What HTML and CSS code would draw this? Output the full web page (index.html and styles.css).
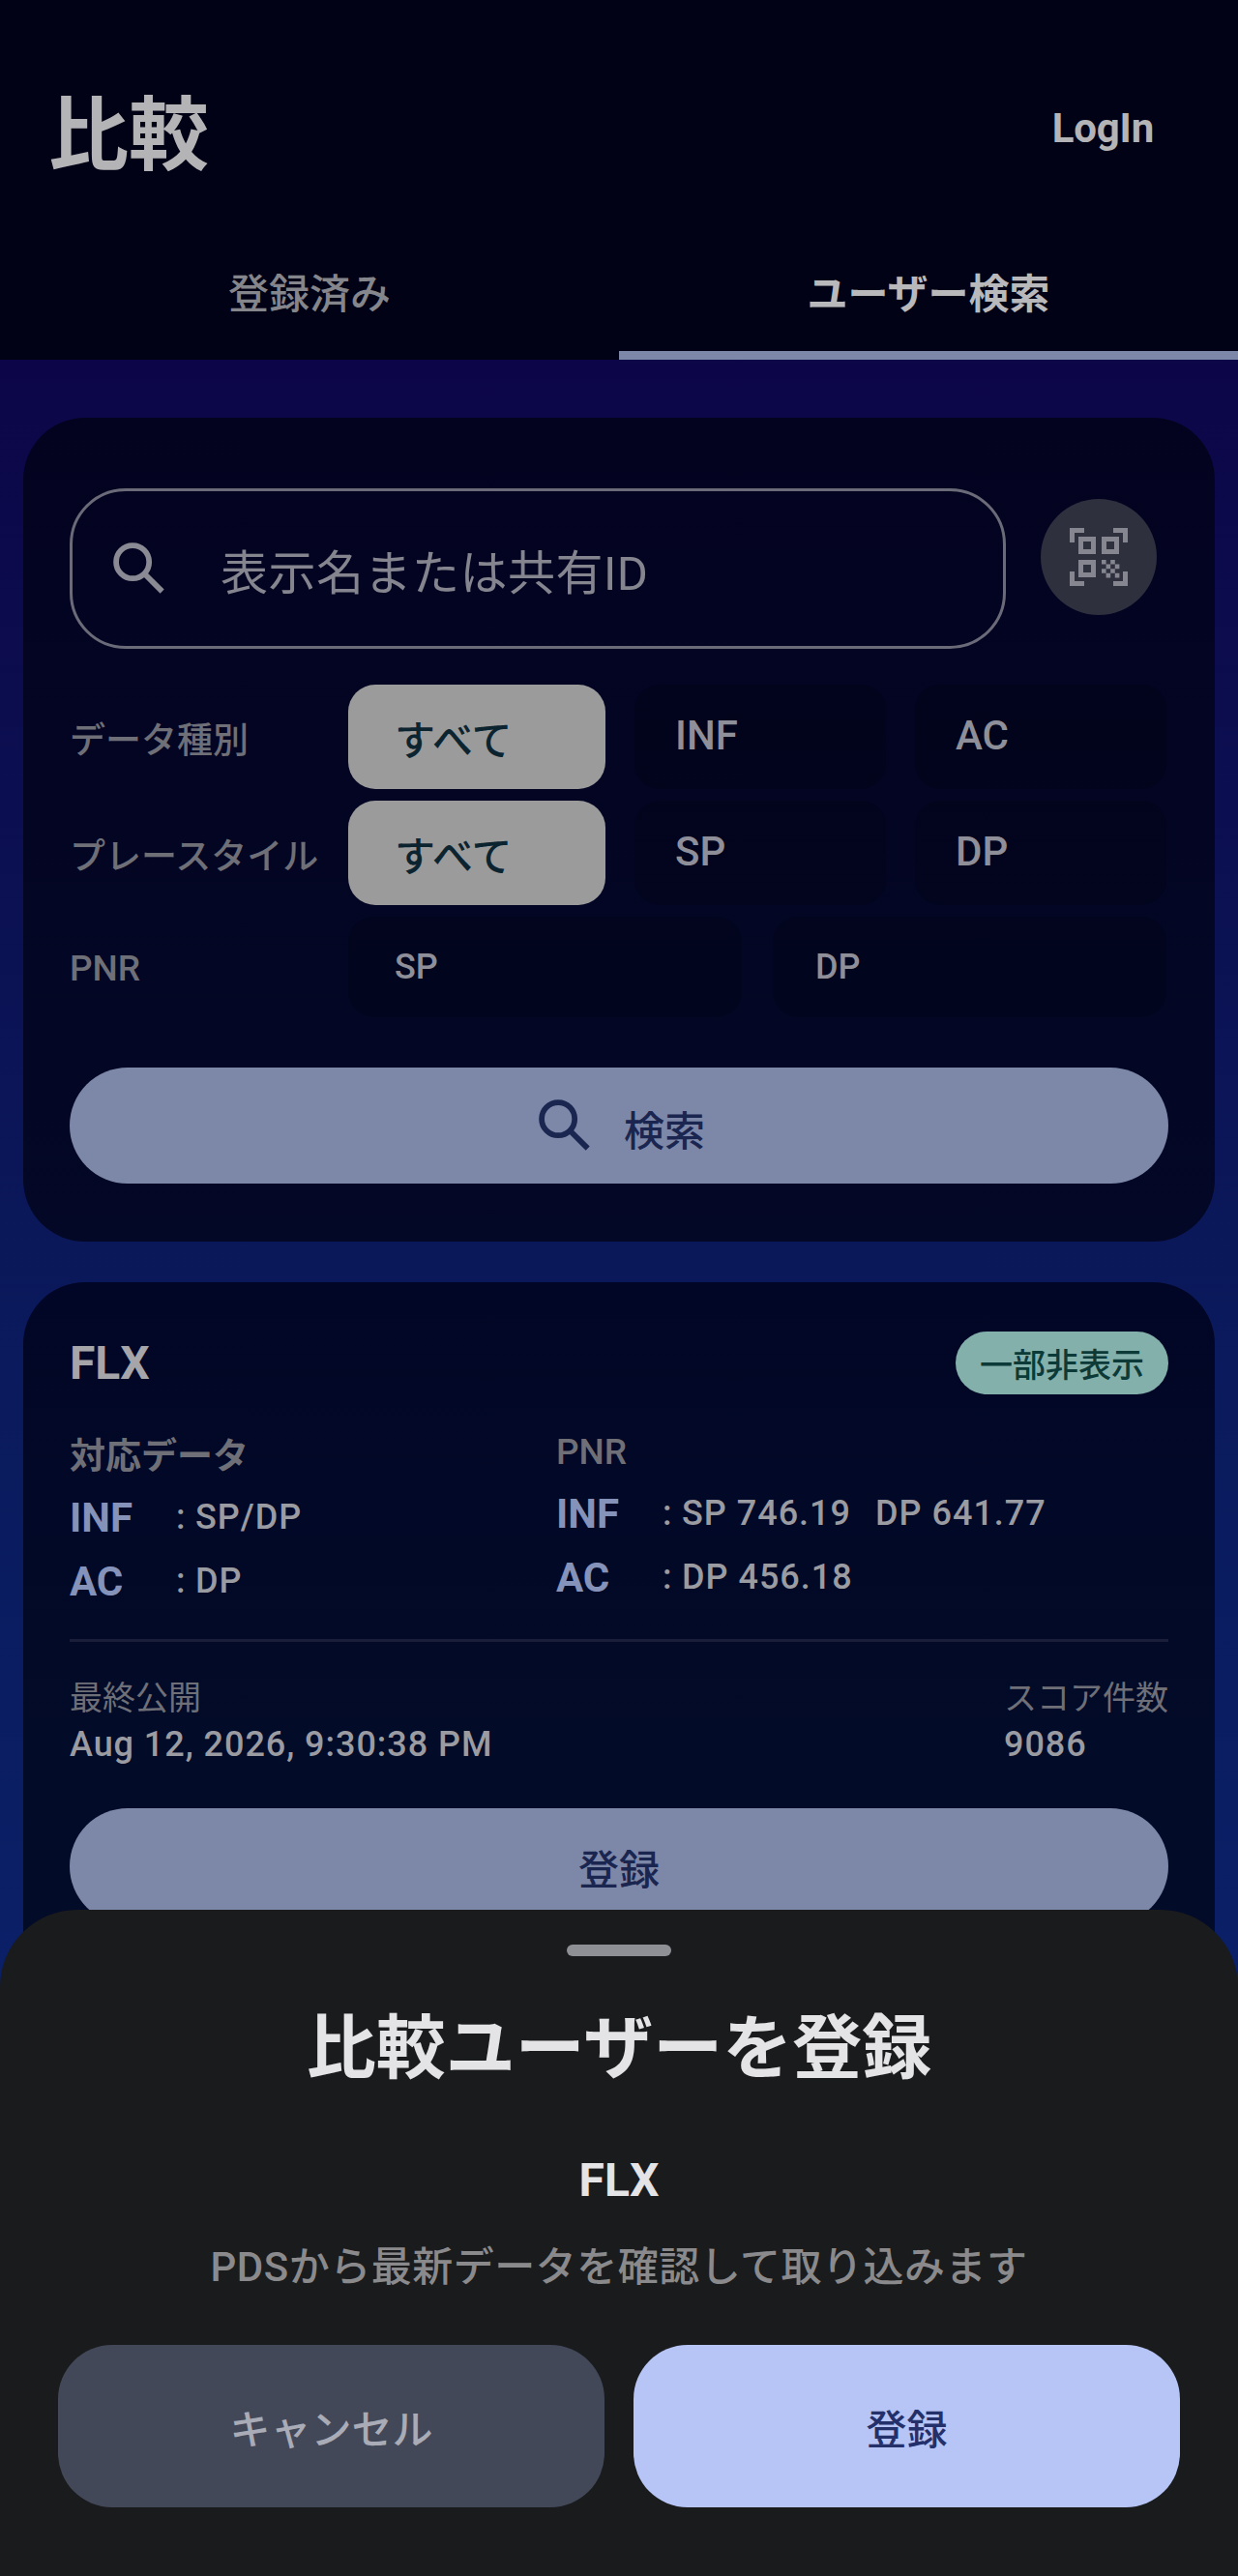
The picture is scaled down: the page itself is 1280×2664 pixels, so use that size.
FILE: index.html
```html
<!DOCTYPE html>
<html lang="ja">
<head>
<meta charset="utf-8">
<title>比較</title>
<link rel="stylesheet" href="styles.css">
</head>
<body>
<div class="app">
  <header class="top">
    <div class="titlebar">
      <h1 class="title">比較</h1>
      <span class="login">LogIn</span>
    </div>
    <nav class="tabs">
      <div class="tab">登録済み</div>
      <div class="tab active">ユーザー検索</div>
    </nav>
  </header>
  <main class="content">
    <section class="card search-card">
      <div class="search-row">
        <div class="field">
          <svg class="ic-search" viewBox="0 0 24 24"><circle cx="9.5" cy="9.5" r="6.2" fill="none" stroke="currentColor" stroke-width="2.1"/><path d="M14 14l6.6 6.6" fill="none" stroke="currentColor" stroke-width="2.1"/></svg>
          <span class="placeholder">表示名または共有ID</span>
        </div>
        <div class="qr">
          <svg viewBox="0 0 60 60" class="ic-qr" fill="#85868f">
            <path d="M0 15V0h15v5H5v10zM45 0h15v15h-5V5H45zM0 45h5v10h10v5H0zM55 45h5v15H45v-5h10z"/>
            <path fill-rule="evenodd" d="M9 9h18v18H9zM14 14v8h8v-8zM33 9h18v18H33zM38 14v8h8v-8zM9 33h18v18H9zM14 38v8h8v-8z"/>
            <path d="M33 33h4.6v4.6H33zM42.2 33h4.6v4.6h-4.6zM37.6 37.6h4.6v4.6h-4.6zM46.8 37.6h4.6v4.6h-4.6zM33 42.2h4.6v4.6H33zM42.2 42.2h4.6v4.6h-4.6zM37.6 46.8h4.6v4.6h-4.6zM46.8 46.8h4.6v4.6h-4.6z"/>
          </svg>
        </div>
      </div>
      <div class="filter">
        <span class="flabel">データ種別</span>
        <div class="chips three">
          <span class="chip on">すべて</span><span class="chip">INF</span><span class="chip">AC</span>
        </div>
      </div>
      <div class="filter">
        <span class="flabel">プレースタイル</span>
        <div class="chips three">
          <span class="chip on">すべて</span><span class="chip">SP</span><span class="chip">DP</span>
        </div>
      </div>
      <div class="filter pnr">
        <span class="flabel">PNR</span>
        <div class="chips two">
          <span class="chip small">SP</span><span class="chip small">DP</span>
        </div>
      </div>
      <div class="primary with-icon">
        <svg class="ic-search" viewBox="0 0 24 24"><circle cx="9.5" cy="9.5" r="6.2" fill="none" stroke="currentColor" stroke-width="2.1"/><path d="M14 14l6.6 6.6" fill="none" stroke="currentColor" stroke-width="2.1"/></svg>
        <span>検索</span>
      </div>
    </section>
    <section class="card user-card">
      <div class="user-head">
        <span class="uname">FLX</span>
        <span class="badge">一部非表示</span>
      </div>
      <div class="data-grid">
        <div class="col">
          <div class="col-title">対応データ</div>
          <div class="drow"><b>INF</b><i>:</i><span>SP/DP</span></div>
          <div class="drow"><b>AC</b><i>:</i><span>DP</span></div>
        </div>
        <div class="col right">
          <div class="col-title">PNR</div>
          <div class="drow"><b>INF</b><i>:</i><span>SP 746.19</span><span class="second">DP 641.77</span></div>
          <div class="drow"><b>AC</b><i>:</i><span>DP 456.18</span></div>
        </div>
      </div>
      <div class="rule"></div>
      <div class="meta">
        <div><div class="mlabel">最終公開</div><div class="mval">Aug 12, 2026, 9:30:38 PM</div></div>
        <div><div class="mlabel">スコア件数</div><div class="mval">9086</div></div>
      </div>
      <div class="primary">登録</div>
    </section>
  </main>
  <aside class="sheet">
    <div class="handle"></div>
    <h2 class="sheet-title">比較ユーザーを登録</h2>
    <div class="sheet-name">FLX</div>
    <p class="sheet-text">PDSから最新データを確認して取り込みます</p>
    <div class="sheet-btns">
      <div class="btn cancel">キャンセル</div>
      <div class="btn ok">登録</div>
    </div>
  </aside>
</div>
</body>
</html>
```
FILE: styles.css
```css
* { box-sizing: border-box; }
html, body { margin: 0; padding: 0; }
body {
  width: 1280px;
  height: 2664px;
  overflow: hidden;
  font-family: Roboto, "Noto Sans CJK JP", sans-serif;
  background: #020216;
}
.app {
  position: relative;
  width: 1280px;
  height: 2664px;
  display: flex;
  flex-direction: column;
  overflow: hidden;
}
.top { background: #020216; height: 372px; flex: none; }
.titlebar {
  height: 264px;
  padding: 0 87px 0 50px;
  display: flex;
  justify-content: space-between;
  align-items: center;
}
.title { margin: 0; padding-top: 16px; font-size: 83px; font-weight: 700; color: #b4b4b6; line-height: 1; }
.login { font-size: 42px; font-weight: 700; color: #b4b4b6; letter-spacing: -0.2px; }
.tabs { display: flex; height: 108px; }
.tab {
  flex: 1;
  display: flex;
  align-items: center;
  justify-content: center;
  padding-bottom: 36px;
  font-size: 42px;
  font-weight: 500;
  color: #85858c;
}
.tab.active { color: #b9b9bb; font-weight: 700; border-bottom: 9px solid #7d88a9; padding-bottom: 27px; }
.content {
  flex: 1;
  padding: 60px 24px 0;
  display: flex;
  flex-direction: column;
  gap: 42px;
  background: linear-gradient(180deg, #0c0648 0, #0a1a5c 45%, #0a2068 75%);
}
.card { border-radius: 64px; padding: 0 48px; }
.search-card { height: 852px; padding-top: 73px; background: linear-gradient(180deg, #030320, #030826); }
.search-row { display: flex; align-items: flex-start; gap: 36px; height: 166px; }
.field {
  width: 968px;
  height: 166px;
  border: 3px solid #6a6a78;
  border-radius: 58px;
  display: flex;
  align-items: center;
  padding-left: 36px;
  color: #8a8a94;
}
.ic-search { width: 66px; height: 66px; flex: none; }
.placeholder { margin-left: 51px; font-size: 49px; letter-spacing: 0.5px; color: #85858f; }
.qr {
  width: 120px;
  height: 120px;
  margin-top: 11px;
  border-radius: 50%;
  background: #2e303e;
  display: flex;
  align-items: center;
  justify-content: center;
}
.ic-qr { width: 60px; height: 60px; }
.filter { display: flex; align-items: center; height: 108px; margin-top: 12px; }
.search-row + .filter { margin-top: 37px; }
.flabel { width: 288px; flex: none; font-size: 37px; font-weight: 500; color: #6f6f78; padding-top: 2px; }
.chips { flex: 1; display: grid; gap: 30px; height: 100%; margin-right: -3px; }
.chips.three { grid-template-columns: 266px 260px 260px; }
.chips.two { grid-template-columns: 407px 407px; gap: 32px; }
.chip {
  border-radius: 26px;
  background: rgba(0, 0, 0, 0.16);
  color: #8f8f9a;
  font-size: 42px;
  font-weight: 500;
  display: flex;
  align-items: center;
  padding-left: 42px;
  padding-bottom: 3px;
}
.chip.on { background: #9b9b9b; color: #0c2430; padding-left: 48px; padding-bottom: 0; font-weight: 500; border-radius: 28px; }
.chip.small { font-size: 36px; padding-left: 48px; padding-bottom: 0; }
.chip.small:last-child { padding-left: 44px; }
.pnr { height: 104px; }
.primary {
  height: 120px;
  border-radius: 60px;
  background: #7d88a9;
  color: #1a2550;
  font-size: 42px;
  font-weight: 500;
  display: flex;
  align-items: center;
  justify-content: center;
  margin-top: 52px;
}
.with-icon { gap: 28px; }
.with-icon span { padding-top: 4px; }
.user-card { flex: 1; padding-top: 50px; background: linear-gradient(180deg, #020626, #020b28 35%); }
.user-card .primary { margin-top: 40px; }
.user-head { display: flex; justify-content: space-between; align-items: center; height: 66px; }
.uname { font-size: 48px; font-weight: 700; color: #a5a5aa; }
.badge {
  height: 65px;
  padding: 0 25px;
  border-radius: 33px;
  background: #83b0ab;
  color: #0c3a38;
  font-size: 34px;
  font-weight: 500;
  display: flex;
  align-items: center;
}
.data-grid { display: grid; grid-template-columns: 503px 1fr; margin-top: 38px; }
.col-title { font-size: 37px; font-weight: 700; color: #6f6f78; line-height: 54px; margin-bottom: 2px; }
.right .col-title { font-weight: 500; line-height: 44px; margin-bottom: 8px; }
.drow { height: 66px; display: flex; align-items: center; font-size: 36px; font-weight: 500; color: #9b9ba2; letter-spacing: 1px; }
.drow b { width: 110px; font-size: 42px; font-weight: 700; color: #8592ba; letter-spacing: 0; }
.drow i { width: 20px; font-style: normal; }
.drow .second { margin-left: 25px; }
.rule { height: 3px; background: #1a1e38; margin-top: 27px; }
.meta { display: flex; justify-content: space-between; margin-top: 36px; }
.mlabel { font-size: 34px; color: #6f6f78; line-height: 44px; }
.mval { font-size: 36px; font-weight: 500; color: #9b9ba2; letter-spacing: 0.95px; line-height: 52px; }
.sheet {
  position: absolute;
  left: 0;
  right: 0;
  top: 1975px;
  bottom: 0;
  background: #1a1b1d;
  border-radius: 80px 80px 0 0;
  display: flex;
  flex-direction: column;
  align-items: center;
  padding-top: 36px;
}
.handle { width: 108px; height: 12px; border-radius: 6px; background: #8f8f96; }
.sheet-title { margin: 48px 0 0; font-size: 72px; font-weight: 700; color: #e4e4e6; line-height: 96px; }
.sheet-name { margin-top: 58px; font-size: 48px; font-weight: 700; color: #e4e4e6; line-height: 60px; }
.sheet-text { margin: 30px 0 0; font-size: 42px; font-weight: 500; color: #8a8a8c; line-height: 60px; letter-spacing: 0.5px; }
.sheet-btns { margin-top: 50px; display: flex; gap: 30px; }
.btn {
  width: 565px;
  height: 168px;
  border-radius: 56px;
  display: flex;
  align-items: center;
  justify-content: center;
  font-size: 42px;
  font-weight: 500;
}
.cancel { background: #434859; color: #a9abb6; }
.ok { background: #b7c5f6; color: #24306a; }
```
